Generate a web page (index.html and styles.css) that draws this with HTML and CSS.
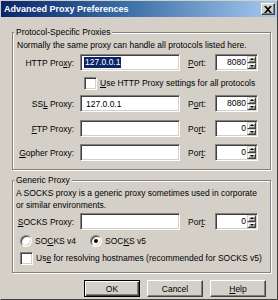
FILE: index.html
```html
<!DOCTYPE html>
<html>
<head>
<meta charset="utf-8">
<link rel="stylesheet" href="styles.css">
</head>
<body>
<div class="window">
  <div class="titlebar">
    <span class="title">Advanced Proxy Preferences</span>
    <span class="close"><svg width="8" height="7" viewBox="0 0 8 7"><path d="M0 0 L2 0 L4 2 L6 0 L8 0 L5 3.5 L8 7 L6 7 L4 5 L2 7 L0 7 L3 3.5 Z" fill="#000"/></svg></span>
  </div>
  <div class="content">
    <fieldset class="group g1">
      <legend>Protocol-Specific Proxies</legend>
      <p class="note">Normally the same proxy can handle all protocols listed here.</p>
      <div class="row r-http">
        <span class="lbl">HTTP Pro<u>x</u>y:</span>
        <span class="field"><span class="sel">127.0.0.1</span></span>
        <span class="plbl"><u>P</u>ort:</span>
        <span class="port"><span class="val">8080</span><span class="spin"><span class="up"></span><span class="dn"></span></span></span>
      </div>
      <div class="row r-check">
        <span class="cb"></span><span class="cbtext"><u>U</u>se HTTP Proxy settings for all protocols</span>
      </div>
      <div class="row r-ssl">
        <span class="lbl">SS<u>L</u> Proxy:</span>
        <span class="field"><span class="txt">127.0.0.1</span></span>
        <span class="plbl">P<u>o</u>rt:</span>
        <span class="port"><span class="val">8080</span><span class="spin"><span class="up"></span><span class="dn"></span></span></span>
      </div>
      <div class="row r-ftp">
        <span class="lbl"><u>F</u>TP Proxy:</span>
        <span class="field"></span>
        <span class="plbl">Po<u>r</u>t:</span>
        <span class="port"><span class="val">0</span><span class="spin"><span class="up"></span><span class="dn"></span></span></span>
      </div>
      <div class="row r-gopher">
        <span class="lbl"><u>G</u>opher Proxy:</span>
        <span class="field"></span>
        <span class="plbl">Por<u>t</u>:</span>
        <span class="port"><span class="val">0</span><span class="spin"><span class="up"></span><span class="dn"></span></span></span>
      </div>
    </fieldset>
    <fieldset class="group g2">
      <legend>Generic Proxy</legend>
      <p class="note2">A SOCKS proxy is a generic proxy sometimes used in corporate or similar environments.</p>
      <div class="row r-socks">
        <span class="lbl"><u>S</u>OCKS Proxy:</span>
        <span class="field"></span>
        <span class="plbl">Por<u>t</u>:</span>
        <span class="port"><span class="val">0</span><span class="spin"><span class="up"></span><span class="dn"></span></span></span>
      </div>
      <div class="row r-radio">
        <span class="rb"></span><span class="rbtext">SO<u>C</u>KS v4</span>
        <span class="rb on"></span><span class="rbtext">SOC<u>K</u>S v5</span>
      </div>
      <div class="row r-check2">
        <span class="cb"></span><span class="cbtext">Us<u>e</u> for resolving hostnames (recommended for SOCKS v5)</span>
      </div>
    </fieldset>
    <div class="buttons">
      <span class="btn default">OK</span>
      <span class="btn">Cancel</span>
      <span class="btn"><u>H</u>elp</span>
    </div>
  </div>
</div>
</body>
</html>
```

FILE: styles.css
```css
* { box-sizing: border-box; }
html, body { margin: 0; padding: 0; }
body {
  background: #d4d0c8;
  font-family: "Liberation Sans", Arial, sans-serif;
  font-size: 8.5px;
  color: #000;
}
u { text-decoration: underline; text-underline-offset: 1px; }

.window {
  width: 278px;
  height: 300px;
  background: #d4d0c8;
  border: 1px solid;
  border-color: #d4d0c8 #404040 #404040 #d4d0c8;
  display: flex;
  flex-direction: column;
}

.titlebar {
  height: 16px;
  flex: none;
  background: linear-gradient(to right, #0a246a 0%, #3a6ea5 45%, #a6caf0 100%);
  display: flex;
  align-items: center;
  justify-content: space-between;
  padding: 0 2px 0 3px;
}
.title {
  color: #fff;
  font-weight: bold;
  font-size: 9px;
  white-space: nowrap;
}
.close {
  width: 14px;
  height: 12px;
  background: #d4d0c8;
  border: 1px solid;
  border-color: #fff #404040 #404040 #fff;
  box-shadow: inset -1px -1px 0 #808080;
  display: flex;
  align-items: center;
  justify-content: center;
}
.close svg { display: block; }

.content {
  padding: 8px 6px 0 11px;
}

.group {
  margin: 0;
  padding: 0 0 8px 0;
  border: 1px solid #808080;
  box-shadow: 1px 1px 0 #fff, inset 1px 1px 0 #fff;
  min-width: 0;
}
.group legend {
  margin-left: 1px;
  padding: 0 2px;
  line-height: 14px;
  background: #d4d0c8;
}
.g2 { margin-top: 3px; padding-bottom: 6px; }

.note {
  margin: 0;
  padding-left: 4px;
  line-height: 12px;
  white-space: nowrap;
}
.note2 {
  margin: 0;
  padding: 0 4px 0 3px;
  line-height: 12px;
}

.row {
  display: flex;
  align-items: center;
  height: 17px;
}
.r-http { margin-top: 3px; }
.r-check { margin-top: 4px; height: 16px; padding-left: 71px; }
.r-ssl { margin-top: 4px; }
.r-ftp { margin-top: 8px; }
.r-gopher { margin-top: 7px; }
.r-socks { margin-top: 2px; }
.r-radio { margin-top: 3px; height: 16px; padding-left: 7px; }
.r-check2 { margin-top: 1px; height: 16px; padding-left: 7px; }

.lbl {
  width: 67px;
  padding-right: 6px;
  text-align: right;
  white-space: nowrap;
}
.field {
  width: 100px;
  height: 17px;
  background: #fff;
  border: 1px solid;
  border-color: #808080 #fff #fff #808080;
  box-shadow: inset 1px 1px 0 #404040, inset -1px -1px 0 #d4d0c8;
  display: flex;
  align-items: center;
  padding-left: 3px;
}
.sel {
  background: #0a246a;
  color: #fff;
  padding: 0 1px;
  line-height: 11px;
}
.txt { padding-left: 2px; }
.plbl {
  width: 35px;
  padding-left: 8px;
  white-space: nowrap;
}
.port {
  width: 43px;
  height: 17px;
  background: #fff;
  border: 1px solid;
  border-color: #808080 #fff #fff #808080;
  box-shadow: inset 1px 1px 0 #404040, inset -1px -1px 0 #d4d0c8;
  display: flex;
  padding: 1px;
}
.val {
  flex: 1;
  text-align: right;
  padding-right: 1px;
  line-height: 13px;
}
.spin {
  width: 9px;
  display: flex;
  flex-direction: column;
}
.spin .up, .spin .dn {
  flex: 1;
  background: #d4d0c8;
  border: 1px solid;
  border-color: #d4d0c8 #404040 #404040 #d4d0c8;
  box-shadow: inset 1px 1px 0 #fff, inset -1px -1px 0 #808080;
  display: flex;
  align-items: center;
  justify-content: center;
}
.spin .up::before {
  content: "";
  width: 0; height: 0;
  border-left: 2px solid transparent;
  border-right: 2px solid transparent;
  border-bottom: 2px solid #000;
}
.spin .dn::before {
  content: "";
  width: 0; height: 0;
  border-left: 2px solid transparent;
  border-right: 2px solid transparent;
  border-top: 2px solid #000;
}

.cb {
  width: 13px;
  height: 13px;
  flex: none;
  background: #fff;
  border: 1px solid;
  border-color: #808080 #fff #fff #808080;
  box-shadow: inset 1px 1px 0 #404040, inset -1px -1px 0 #d4d0c8;
}
.cbtext { margin-left: 3px; white-space: nowrap; }

.rb {
  width: 12px;
  height: 12px;
  flex: none;
  border-radius: 50%;
  background: #fff;
  border: 1px solid;
  border-color: #808080 #fff #fff #808080;
  box-shadow: inset 1px 1px 0 #404040, inset -1px -1px 0 #d4d0c8;
  display: flex;
  align-items: center;
  justify-content: center;
}
.rb.on::after {
  content: "";
  width: 4px;
  height: 4px;
  border-radius: 50%;
  background: #000;
}
.rbtext { margin-left: 3px; width: 55px; white-space: nowrap; }

.buttons {
  display: flex;
  justify-content: flex-end;
  gap: 7px;
  margin-top: 7px;
  padding-right: 5px;
}
.btn {
  width: 56px;
  height: 17px;
  border: 1px solid;
  border-color: #fff #404040 #404040 #fff;
  box-shadow: inset -1px -1px 0 #808080;
  display: flex;
  align-items: center;
  justify-content: center;
}
.btn.default {
  border: 1px solid #000;
  box-shadow: inset 1px 1px 0 #fff, inset -1px -1px 0 #404040, inset -2px -2px 0 #808080;
}
```
